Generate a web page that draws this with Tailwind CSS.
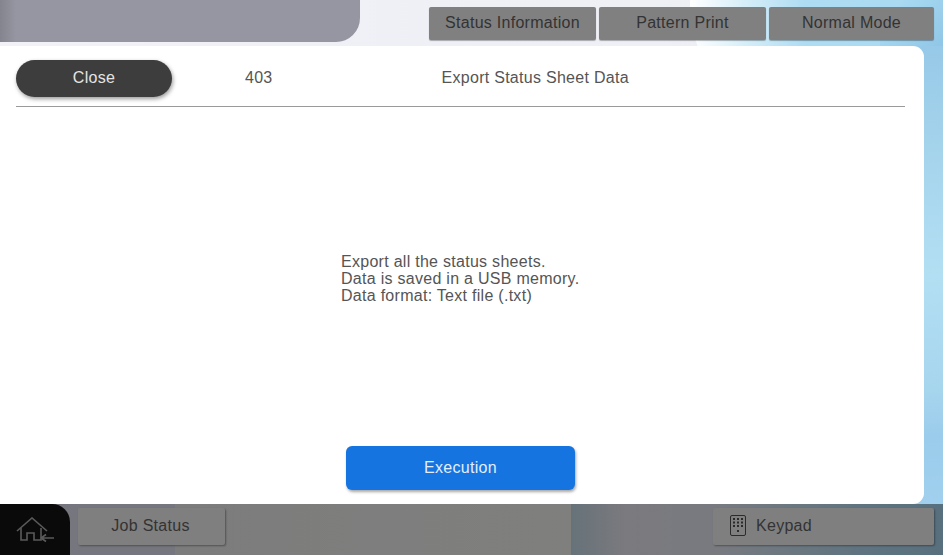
<!DOCTYPE html>
<html><head><meta charset="utf-8"><script src="https://cdn.jsdelivr.net/npm/@tailwindcss/browser@4"></script></head>
<body class="bg-white">
<div class="w-[943px] h-[555px] overflow-hidden flex flex-col [font-family:'Liberation_Sans',Arial,sans-serif] text-[16px] text-[#555555]">
  <header class="relative h-[46px] shrink-0 flex justify-between overflow-hidden bg-[linear-gradient(90deg,#f1f1f7_0%,#eef0f6_70%,#e4e8f0_100%)]">
    <div class="absolute left-[690px] top-[-110px] w-[230px] h-[230px] rounded-full bg-[linear-gradient(90deg,#ffffff_0%,#d4edf8_25%,#aedcf3_50%,#a9daf2_100%)]"></div>
    <div class="absolute left-[880px] top-0 w-[63px] h-[46px] bg-[linear-gradient(135deg,#a9daf2_20%,#90c6e6_100%)]"></div>
    <div class="relative w-[360px] h-[42px] rounded-br-[24px] bg-[linear-gradient(90deg,#84848e_0px,#9696a2_16px)]"></div>
    <nav class="relative flex gap-[3px] pt-[7px] pr-[9px] text-[#333333]">
      <div class="w-[167px] h-[33px] pb-[2px] flex items-center justify-center rounded-[2px] bg-[#808080] shadow-[0_1px_1px_rgba(0,0,0,0.3)] tracking-[0.28px]">Status Information</div>
      <div class="w-[167px] h-[33px] pb-[2px] flex items-center justify-center rounded-[2px] bg-[#808080] shadow-[0_1px_1px_rgba(0,0,0,0.3)] tracking-[0.28px]">Pattern Print</div>
      <div class="w-[165px] h-[33px] pb-[2px] flex items-center justify-center rounded-[2px] bg-[#808080] shadow-[0_1px_1px_rgba(0,0,0,0.3)] tracking-[0.28px]">Normal Mode</div>
    </nav>
  </header>
  <div class="flex h-[458px] shrink-0 bg-[linear-gradient(90deg,rgba(90,130,165,0.45)_0px,rgba(90,130,165,0)_9px),linear-gradient(180deg,#97c9e8_0%,#a0d0ea_15%,#b3dff3_50%,#a6d5ee_75%,#9bcceb_85%,#a0d0ee_100%)]">
    <main class="w-[924px] h-full bg-white rounded-r-[11px] flex flex-col pl-[16px] pr-[19px]">
      <div class="h-[61px] shrink-0 border-b border-[#9a9a9a] pt-[14px] flex items-start">
        <button class="w-[156px] h-[37px] pb-[2px] rounded-full bg-[#3d3d3d] text-[#e4e4e4] shadow-[1px_2px_4px_rgba(0,0,0,0.4)] tracking-[0.28px]">Close</button>
        <div class="ml-[73px] h-[37px] pb-[2px] flex items-center tracking-[0.28px]">403</div>
        <div class="ml-[169px] h-[37px] pb-[2px] flex items-center tracking-[0.28px]">Export Status Sheet Data</div>
      </div>
      <div class="flex-1 flex items-center pl-[325px] pt-[4px] tracking-[0.28px] leading-[17px]">
        <p>Export all the status sheets.<br>Data is saved in a USB memory.<br>Data format: Text file (.txt)</p>
      </div>
      <div class="flex justify-center pb-[14px]">
        <button class="w-[229px] h-[44px] rounded-[6px] bg-[#1574e0] text-[#e3eefb] shadow-[1px_2px_3px_rgba(0,0,0,0.35)] tracking-[0.28px]">Execution</button>
      </div>
    </main>
  </div>
  <footer class="relative flex-1 flex justify-between overflow-hidden text-[#333333] bg-[linear-gradient(90deg,#76767e_0px,#76767e_175px,#7c7c7c_175px,#7f807e_571px,#667279_571px,#7b7a7e_625px,#787a80_720px,#5f7480_860px,#58707e_943px)]">
    <div class="flex items-start">
      <div class="w-[70px] h-[51px] rounded-tr-[18px] bg-[#0a0a0a] flex items-center justify-center pt-[4px]">
        <svg width="40" height="30" viewBox="0 0 40 30" fill="none" stroke="#5a5a5a" stroke-width="1.6">
          <path d="M2 14 L17 1 L32 14"/>
          <path d="M6 11 V23 H12 V16 H19 V23 H26 V11"/>
          <path d="M26 21 H39 M26 21 L31 17.5 M26 21 L31 24.5"/>
        </svg>
      </div>
      <div class="ml-[8px] mt-[4px] w-[147px] h-[37px] pb-[2px] pr-[2px] rounded-[2px] bg-[#7f7f7f] shadow-[1px_1px_2px_rgba(0,0,0,0.35)] flex items-center justify-center tracking-[0.28px]">Job Status</div>
    </div>
    <div class="mr-[9px] mt-[4px] w-[221px] h-[37px] pb-[2px] rounded-[2px] bg-[#7f7f7f] shadow-[1px_1px_2px_rgba(0,0,0,0.35)] flex items-center gap-[9px] pl-[17px] tracking-[0.28px]">
      <svg width="17" height="21" viewBox="0 0 17 21" fill="none">
        <rect x="0.5" y="0.5" width="15" height="20" rx="1.5" stroke="#2b2b2b"/>
        <g fill="#2b2b2b">
          <rect x="3" y="3" width="2" height="2"/><rect x="7" y="3" width="2" height="2"/><rect x="11" y="3" width="2" height="2"/>
          <rect x="3" y="6.5" width="2" height="2"/><rect x="7" y="6.5" width="2" height="2"/><rect x="11" y="6.5" width="2" height="2"/>
          <rect x="3" y="10" width="2" height="2"/><rect x="7" y="10" width="2" height="2"/><rect x="11" y="10" width="2" height="2"/>
          <rect x="7" y="15" width="2" height="2"/>
        </g>
      </svg>
      <span>Keypad</span>
    </div>
  </footer>
</div>
</body></html>
